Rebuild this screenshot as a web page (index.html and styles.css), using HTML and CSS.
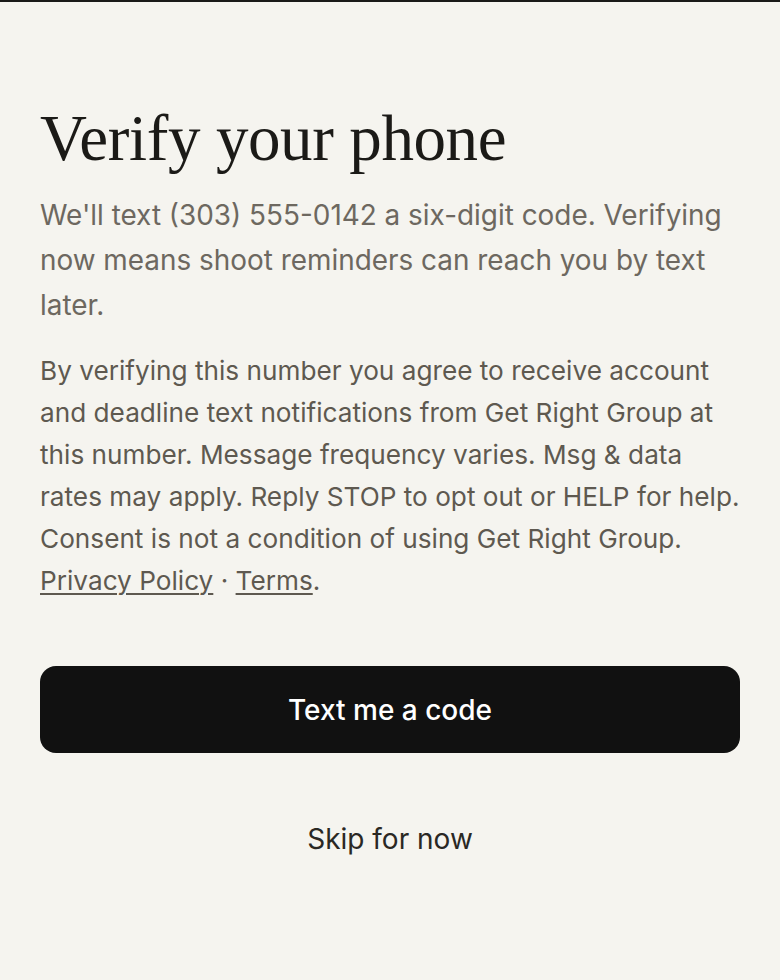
FILE: index.html
```html
<!DOCTYPE html>
<html lang="en">
<head>
<meta charset="utf-8">
<title>Verify your phone</title>
<link rel="stylesheet" href="styles.css">
</head>
<body>
<div class="topbar"></div>
<main class="page">
  <h1 class="title">Verify your phone</h1>
  <p class="lead">We'll text (303) 555-0142 a six-digit code. Verifying now means shoot reminders can reach you by text later.</p>
  <p class="consent">By verifying this number you agree to receive account and deadline text notifications from Get Right Group at this number. Message frequency varies. Msg &amp; data rates may apply. Reply STOP to opt out or HELP for help. Consent is not a condition of using Get Right Group. <a href="#" class="link">Privacy Policy</a> · <a href="#" class="link">Terms</a>.</p>
  <button class="primary" type="button">Text me a code</button>
  <button class="skip" type="button">Skip for now</button>
</main>
</body>
</html>
```
FILE: styles.css
```css
html, body {
  margin: 0;
  padding: 0;
  background: #f5f4ef;
}
body {
  font-family: Inter, "Noto Sans", sans-serif;
  min-height: 980px;
}
.topbar {
  height: 2px;
  background: #1a1a18;
}
.page {
  padding: 101px 40px 0;
  display: flex;
  flex-direction: column;
}
.title {
  margin: 0;
  font-family: "Liberation Serif", "DejaVu Serif", serif;
  font-weight: 400;
  font-size: 65px;
  line-height: 70px;
  color: #1b1a17;
  letter-spacing: -0.4px;
}
.lead {
  margin: 20px 0 0;
  font-size: 27.9px;
  line-height: 45px;
  color: #6d6860;
}
.consent {
  margin: 22px 0 0;
  font-size: 26.2px;
  line-height: 42px;
  color: #5e5950;
}
.link {
  color: #5e5950;
  text-decoration: underline;
  text-underline-offset: 3px;
  text-decoration-thickness: 1.5px;
}
.primary {
  margin-top: 64px;
  height: 87px;
  border: none;
  border-radius: 16px;
  background: #111111;
  color: #ffffff;
  font-family: Inter, "Noto Sans", sans-serif;
  font-size: 28px;
  font-weight: 500;
  cursor: pointer;
}
.skip {
  margin-top: 68px;
  align-self: center;
  border: none;
  background: none;
  padding: 0;
  font-family: Inter, "Noto Sans", sans-serif;
  font-size: 28px;
  line-height: 36px;
  color: #2a2824;
  cursor: pointer;
}
```
